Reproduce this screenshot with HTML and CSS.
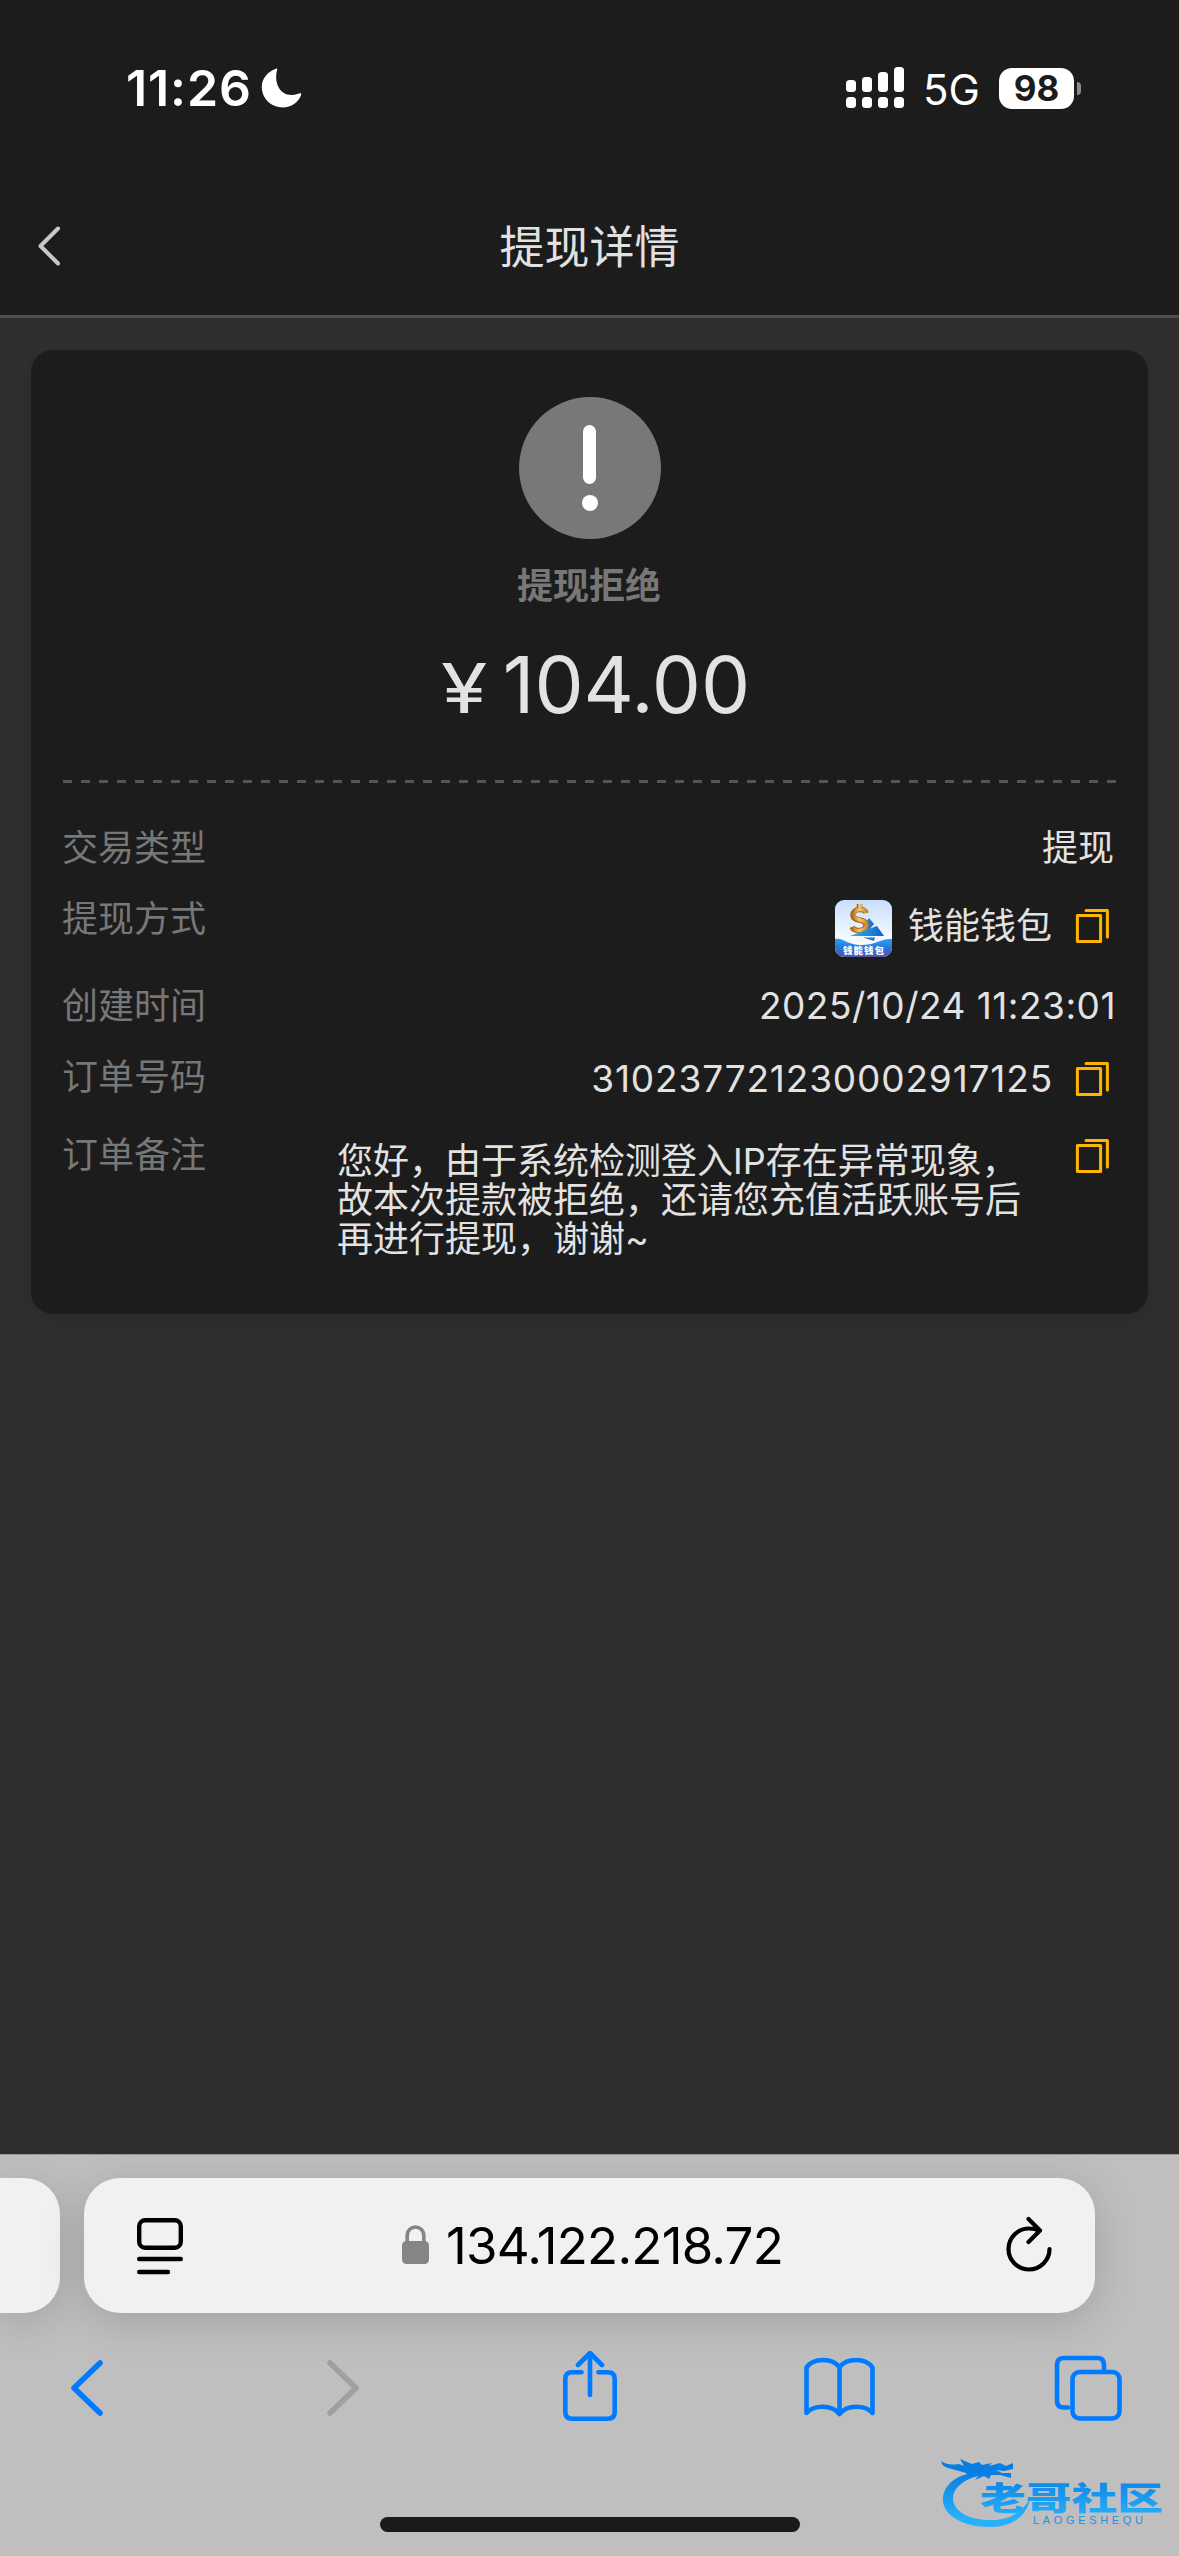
FILE: index.html
```html
<!DOCTYPE html>
<html lang="zh-CN">
<head>
<meta charset="utf-8">
<title>提现详情</title>
<link rel="stylesheet" href="styles.css">
</head>
<body>
<svg width="0" height="0" class="defs">
  <symbol id="copy" viewBox="0 0 36 36">
    <path d="M11 2.4H32.4V29" /><path d="M2.4 7.4H25.6V33.6H2.4Z" />
  </symbol>
</svg>
<div class="screen">
  <header class="top">
    <div class="status">
      <span class="time">11:26</span>
      <svg class="moon" viewBox="0 0 40 40"><path d="M14.5 .8C15.6 0 16 .6 15.6 2C12.5 13 17 27.500 31 27C34 26.900 36 26 38.400 25.300C39.600 25 40 25.700 39.600 27C37 34.500 29.500 39.500 21.500 39.500C9.500 39.500 .3 30.500 .3 18.800C.3 11 6 3.600 14.500 .8Z"/></svg>
      <span class="spacer"></span>
      <svg class="signal" viewBox="0 0 58 41">
        <rect x="0" y="13" width="10" height="12" rx="3.500"/><rect x="16" y="10" width="10" height="15" rx="3.500"/><rect x="32" y="5" width="10" height="20" rx="3.500"/><rect x="48" y="0" width="10" height="25" rx="3.500"/>
        <rect x="0" y="30" width="10" height="11" rx="3.500"/><rect x="16" y="30" width="10" height="11" rx="3.500"/><rect x="32" y="30" width="10" height="11" rx="3.500"/><rect x="48" y="30" width="10" height="11" rx="3.500"/>
      </svg>
      <span class="net">5G</span>
      <span class="battery">98</span>
      <span class="nub"></span>
    </div>
    <nav class="nav">
      <svg class="nav-back" viewBox="0 0 28 42"><path d="M23 3.500L5.500 21L23 38.500"/></svg>
      <h1>提现详情</h1>
    </nav>
  </header>

  <main class="content">
    <section class="card">
      <div class="badge"><span class="bar"></span><span class="dot"></span></div>
      <p class="state">提现拒绝</p>
      <p class="amount"><span class="yen">¥</span><span>104.00</span></p>
      <div class="divider"></div>
      <dl class="rows">
        <div class="row type"><dt>交易类型</dt><dd>提现</dd></div>
        <div class="row method"><dt>提现方式</dt><dd>
          <svg class="wallet" viewBox="0 0 57 57">
            <defs>
              <linearGradient id="sky" x2="0" y2="1"><stop offset="0" stop-color="#c9dffb"/><stop offset=".7" stop-color="#f6fbff"/></linearGradient>
              <linearGradient id="sea" x2="0" y2="1"><stop offset="0" stop-color="#2da0f3"/><stop offset=".5" stop-color="#2a78d8"/><stop offset="1" stop-color="#5450a8"/></linearGradient>
              <linearGradient id="gold"><stop offset="0" stop-color="#b9711f"/><stop offset=".5" stop-color="#f3c873"/><stop offset="1" stop-color="#d08a2b"/></linearGradient>
              <linearGradient id="sail"><stop offset="0" stop-color="#2cb4ee"/><stop offset="1" stop-color="#1663c4"/></linearGradient>
              <clipPath id="round"><rect width="57" height="57" rx="9"/></clipPath>
            </defs>
            <g clip-path="url(#round)">
              <rect width="57" height="57" fill="url(#sky)"/>
              <path d="M34 18L39 24L34 30L25 31Z" fill="url(#sail)"/>
              <path d="M28 37.500H40L39 41Z" fill="#2278d6"/>
              <path d="M31 13C30 8 18 8 18 15C18 22 31 18 31 25C31 32 19 32 17 27M24.500 4V9" fill="none" stroke="#a9651d" stroke-width="5.500"/>
              <path d="M31.500 13C30 8 19 8 19 15C19 22 31.500 18 31.500 25C31 32 19 32 17.500 27M25 4V9" fill="none" stroke="url(#gold)" stroke-width="3.600"/>
              <path d="M15 36L42 26L49 36Z" fill="url(#sail)"/>
              <path d="M0 39C8 37 12 45 26 45C41 45 46 38 57 39V57H0Z" fill="url(#sea)"/>
              <text x="8" y="54" textLength="41" class="wallet-name">钱能钱包</text>
            </g>
          </svg>
          <span class="text">钱能钱包</span><svg class="copy"><use href="#copy"/></svg></dd></div>
        <div class="row created"><dt>创建时间</dt><dd class="date">2025/10/24 11:23:01</dd></div>
        <div class="row order"><dt>订单号码</dt><dd><span class="text number">310237721230002917125</span><svg class="copy"><use href="#copy"/></svg></dd></div>
        <div class="row remark"><dt>订单备注</dt><dd><span class="note">您好，由于系统检测登入IP存在异常现象，<br>故本次提款被拒绝，还请您充值活跃账号后<br>再进行提现，谢谢~</span><svg class="copy"><use href="#copy"/></svg></dd></div>
      </dl>
    </section>
  </main>

  <footer class="browser">
    <div class="tabs">
      <div class="prev-tab"></div>
      <div class="url-bar">
        <svg class="reader" viewBox="0 0 46 56"><rect x="2.200" y="2.200" width="41.600" height="27.600" rx="6"/><path d="M2.200 41H43.800M2.200 54H31"/></svg>
        <div class="address">
          <svg class="lock" viewBox="0 0 27 39"><rect y="16" width="27" height="23" rx="4.500" fill="#858587"/><path d="M5.200 18V11C5.200 -1 21.800 -1 21.800 11V18" fill="none" stroke="#858587" stroke-width="3.600"/></svg>
          <span>134.122.218.72</span>
        </div>
        <svg class="reload" viewBox="0 0 48 58"><path d="M34 15.500C31 14 28 13.500 24 13.500A20.500 20.500 0 1 0 44.500 34M23.500 4L35 15.500L23.500 27"/></svg>
      </div>
    </div>
    <div class="tools">
      <svg viewBox="0 0 74 74"><path d="M50 12L24 37L50 62"/></svg>
      <svg class="off" viewBox="-6 0 74 74"><path d="M24 12L50 37L24 62"/></svg>
      <svg viewBox="-2 0 74 74"><path class="fine" d="M28.500 21.300H19Q12.300 21.300 12.300 28V61Q12.300 67.700 19 67.700H55Q61.700 67.700 61.700 61V28Q61.700 21.300 55 21.300H45.500M37 44V2.500M25 14L37 2L49 14"/></svg>
      <svg viewBox="-1.500 0 74 74"><path class="fine" d="M37 16C30 7 11 6 4 16.500V62C11 54 29 53 37 63C45 53 63 54 70 62V16.500C63 6 44 7 37 16ZM37 16V62"/></svg>
      <svg viewBox="3 0 74 74"><path class="fine" d="M20 56.500H16Q9 56.500 9 50V14Q9 7 16 7H49.500Q56 7 56 14V20"/><rect class="fine" x="24.500" y="21" width="47" height="46.500" rx="7"/></svg>
    </div>
    <div class="home"></div>
  </footer>

  <svg class="watermark" viewBox="0 0 230 80">
    <defs><linearGradient id="wm" gradientUnits="userSpaceOnUse" x1="0" y1="20" x2="0" y2="66"><stop offset="0" stop-color="#087de2"/><stop offset="1" stop-color="#27b1fb"/></linearGradient></defs>
    <g fill="url(#wm)">
      <path d="M28 22C10 26 2 38 3 50C5 64 23 75 50 75C72 75 86 65 90 47C82 60 70 68 51 68C29 68 13 60 13 46C13 36 24 28 37 24Z"/>
      <path d="M1 9C7 13 12 13 19 12L24 14L20 7L32 12L39 10L42 13L52 11L49 14L60 11L66 14L73 11L73 17L64 19L56 18L62 21L71 21V26L60 23L51 23L49 27L44 24L35 28L38 24L29 26L26 21L12 17C6 16 2 14 1 9Z"/>
      <text x="40" y="58" textLength="183" lengthAdjust="spacingAndGlyphs" class="wm-name">老哥社区</text>
    </g>
    <text x="93" y="72" textLength="110" class="wm-sub">LAOGESHEQU</text>
  </svg>
</div>
</body>
</html>
```
FILE: styles.css
```css
* { box-sizing: border-box; margin: 0; padding: 0; }
body { background: #2f2f2f; font-family: Inter, "Noto Sans CJK SC", sans-serif; color: #e2e2e2; }
svg { display: block; flex: none; }
.defs { position: absolute; }
.screen { position: relative; width: 1179px; height: 2556px; display: flex; flex-direction: column; overflow: hidden; }

.top { height: 318px; background: #1c1c1c; border-bottom: 3px solid #4f4f4f; }
.status { height: 176px; padding: 0 98px 0 126px; display: flex; align-items: center; color: #fff; }
.time { font-size: 50px; font-weight: 600; line-height: 60px; width: 134px; white-space: nowrap; letter-spacing: 0.9px; }
.moon { width: 41px; height: 40px; margin-left: 1px; fill: #fff; }
.spacer { flex: 1; }
.signal { width: 58px; height: 41px; margin-bottom: 1px; fill: #fff; }
.net { width: 76px; margin-left: 19px; font-size: 42px; line-height: 50px; padding-top: 3px; letter-spacing: 0; }
.battery { width: 75px; height: 41px; border-radius: 13px; background: #fff; color: #1c1c1c; font-size: 35px; font-weight: 700; line-height: 41px; text-align: center; }
.nub { width: 4px; height: 13px; margin-left: 3px; border-radius: 0 4px 4px 0; background: #8c8c8c; }
.nav { height: 139px; display: flex; align-items: center; padding: 0 35px; }
.nav-back { width: 28px; height: 42px; fill: none; stroke: #c8c8c8; stroke-width: 4; stroke-linecap: round; stroke-linejoin: round; }
.nav h1 { flex: 1; margin-right: 28px; padding-top: 4px; text-align: center; font-size: 45px; font-weight: 400; line-height: 60px; }

.content { flex: 1; padding: 32px 31px; }
.card { height: 964px; padding: 47px 31px 0 32px; border-radius: 22px; background: #1c1c1c; box-shadow: 0 6px 24px rgba(0, 0, 0, .1); display: flex; flex-direction: column; }
.badge { width: 142px; height: 142px; border-radius: 50%; background: #787878; align-self: center; margin-right: 1px; display: flex; flex-direction: column; align-items: center; padding-top: 28px; gap: 11px; }
.bar { width: 13px; height: 59px; border-radius: 7px; background: #fff; }
.dot { width: 16px; height: 16px; border-radius: 50%; background: #fff; }
.state { margin-top: 21px; padding-right: 2px; font-size: 36px; font-weight: 700; line-height: 52px; text-align: center; color: #777; }
.amount { margin-top: 23px; height: 100px; display: flex; justify-content: center; align-items: baseline; gap: 24px; font-size: 78px; line-height: 100px; padding-left: 11px; }
.yen { font-size: 69px; transform: scaleX(1.22); transform-origin: 0 50%; }
.divider { margin-top: 45px; height: 3px; background: repeating-linear-gradient(90deg, #555 0 9px, transparent 9px 18px); }

.rows { padding-top: 45px; margin-left: -1px; font-size: 36px; line-height: 40px; }
.row { display: flex; justify-content: space-between; align-items: flex-start; }
.row dt { color: #777; }
.row dd { display: flex; align-items: center; }
.type { height: 71px; }
.type dd { padding-right: 3px; }
.method { height: 87px; }
.created { height: 71px; }
.order { height: 78px; }
.wallet { width: 57px; height: 57px; margin: 1px 16px 0 0; }
.wallet-name { font: 900 9.500px "Noto Sans CJK SC", sans-serif; fill: #fff; }
.date, .number { font-size: 37px; }
.date { padding-right: 1px; letter-spacing: 0.5px; }
.number { letter-spacing: 0.85px; margin-right: -1px; }
.copy { width: 36px; height: 36px; margin: 0 6px 0 23px; fill: none; stroke: #ffb400; stroke-width: 3; stroke-linejoin: round; stroke-linecap: round; }
.method .text, .method .copy { margin-bottom: 4px; }
.order dd { padding-top: 2px; }
.remark dd { align-items: flex-start; }
.note { width: 715px; padding-top: 7px; line-height: 39px; white-space: nowrap; }
.remark .copy { margin-top: 3px; }

.browser { height: 402px; background: #bfbfbf; border-top: 1px solid #999; display: flex; flex-direction: column; align-items: center; }
.tabs { align-self: stretch; padding: 23px 84px 0 0; display: flex; gap: 24px; }
.prev-tab, .url-bar { height: 135px; background: #f1f1f1; box-shadow: 0 8px 44px rgba(0, 0, 0, .16); }
.prev-tab { width: 60px; border-radius: 0 36px 36px 0; }
.url-bar { flex: 1; border-radius: 36px; padding: 0 42px 0 53px; display: flex; align-items: center; justify-content: space-between; }
.reader { width: 46px; height: 56px; overflow: visible; margin-top: 1px; fill: none; stroke: #000; stroke-width: 4.4; stroke-linecap: round; }
.address { display: flex; align-items: center; gap: 17px; margin-right: 3px; color: #000; font-size: 51px; line-height: 60px; letter-spacing: -0.75px; }
.lock { width: 27px; height: 39px; margin-bottom: 2px; }
.reload { width: 48px; height: 58px; margin-bottom: 4px; fill: none; stroke: #000; stroke-width: 4.2; stroke-linecap: round; stroke-linejoin: round; }
.tools { align-self: stretch; margin-top: 38px; padding: 0 54px 0 50px; height: 74px; display: flex; justify-content: space-between; }
.tools svg { width: 74px; height: 74px; fill: none; stroke: #007aff; stroke-width: 5.6; stroke-linecap: round; stroke-linejoin: round; }
.tools .off { stroke: #a0a0a0; }
.tools .fine { stroke-width: 4.6; }
.home { width: 420px; height: 15px; margin-top: 92px; border-radius: 8px; background: #1b1b1b; }

.watermark { position: absolute; left: 940px; top: 2452px; width: 230px; height: 80px; }
.wm-name { font: 900 32px "Noto Sans CJK SC", sans-serif; }
.wm-sub { font: 400 11px "Liberation Sans", sans-serif; fill: #258fe0; }
```
